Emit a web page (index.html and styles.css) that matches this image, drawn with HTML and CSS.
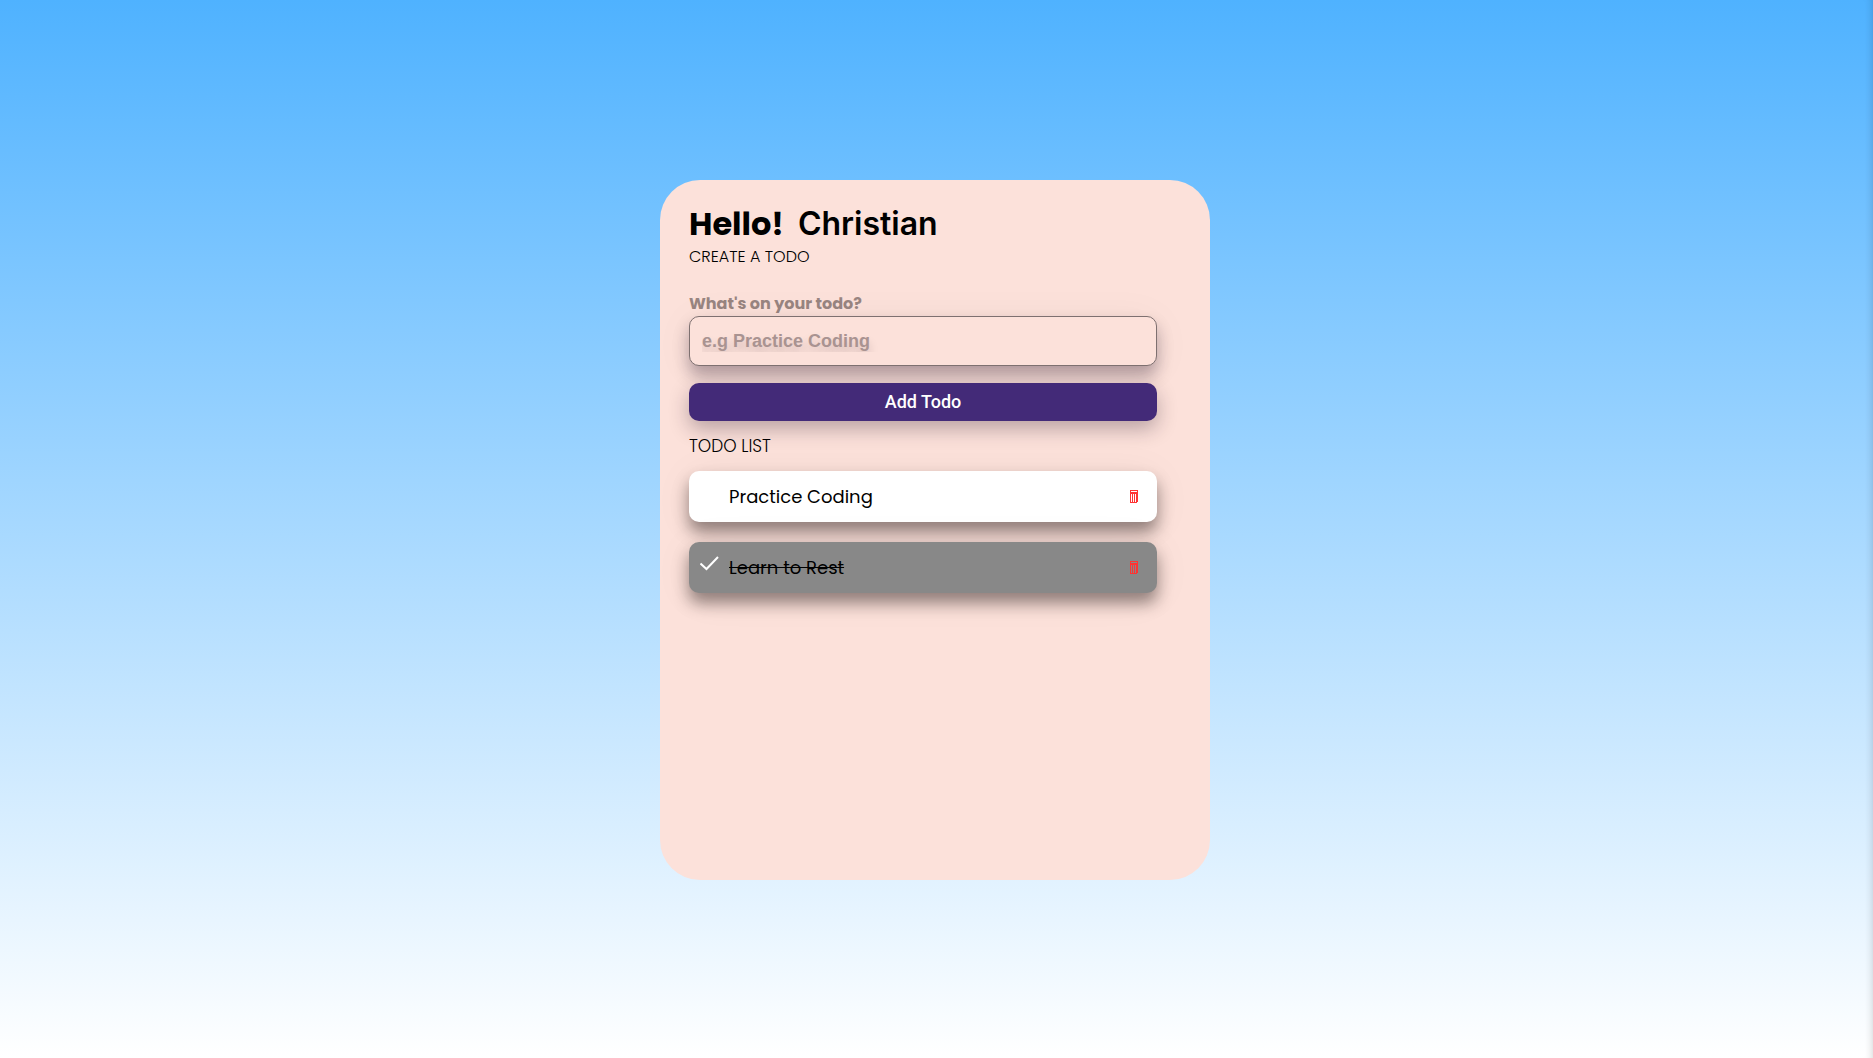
FILE: index.html
```html
<!DOCTYPE html>
<html lang="en">
<head>
<meta charset="utf-8">
<meta name="viewport" content="width=device-width, initial-scale=1">
<title>Todo</title>
<link rel="stylesheet" href="styles.css">
</head>
<body>
<main class="card">
  <h1 class="greeting"><span class="hello">Hello!</span><span class="name">Christian</span></h1>
  <h2 class="subtitle">CREATE A TODO</h2>
  <form class="form">
    <label class="label" for="todo">What's on your todo?</label>
    <input class="field" id="todo" type="text" placeholder="e.g Practice Coding">
    <button class="add" type="button">Add Todo</button>
  </form>
  <h2 class="list-title">TODO LIST</h2>
  <ul class="list">
    <li class="item">
      <span class="tick"><input class="check" id="t1" type="checkbox"></span>
      <label class="text" for="t1">Practice Coding</label>
      <button class="delete" type="button" aria-label="Delete Practice Coding">
        <svg width="8" height="13" viewBox="0 0 8 13" shape-rendering="crispEdges" fill="#ff3333"><path fill-rule="evenodd" d="M0 0h8v12h-1v1H0zM1 1v1h6V1zM1 4v8h1V4zM3 4v8h1V4zM5 4v8h1V4z"/></svg>
      </button>
    </li>
    <li class="item done">
      <span class="tick"><input class="check" id="t2" type="checkbox" checked><svg class="mark" width="20" height="16" viewBox="0 0 20 16" fill="none" stroke="#fff" stroke-width="2"><path d="M0.500 7.500L6.500 13L18 1"/></svg></span>
      <label class="text" for="t2">Learn to Rest</label>
      <button class="delete" type="button" aria-label="Delete Learn to Rest">
        <svg width="8" height="13" viewBox="0 0 8 13" shape-rendering="crispEdges" fill="#ff3333"><path fill-rule="evenodd" d="M0 0h8v12h-1v1H0zM1 1v1h6V1zM1 4v8h1V4zM3 4v8h1V4zM5 4v8h1V4z"/></svg>
      </button>
    </li>
  </ul>
</main>
</body>
</html>
```
FILE: styles.css
```css
* { box-sizing: border-box; }
body {
  margin: 0;
  min-height: 100vh;
  display: flex;
  justify-content: center;
  align-items: center;
  background: linear-gradient(#4fb2ff, #fff);
  box-shadow: inset -8px 0 8px -8px rgba(0, 0, 0, .2);
  font-family: Poppins, Inter, sans-serif;
  color: #000;
  padding: 2px 3px 0 0;
}
.card {
  width: 100%;
  max-width: 550px;
  min-height: 700px;
  padding: 24px 53px 24px 29px;
  border-radius: 40px;
  background: #fce1da;
}
.greeting {
  display: flex;
  gap: 14px;
  margin: 0;
  font-size: 32px;
  line-height: 40px;
}
.hello { font-weight: 700; }
.name { font-weight: 600; font-family: Inter, sans-serif; }
.subtitle, .list-title {
  margin: 0;
  font-size: 16px;
  font-weight: 300;
  line-height: 26px;
}
.form {
  display: flex;
  flex-direction: column;
  margin: 22px 0 12px;
}
.label {
  font-size: 16px;
  font-weight: 700;
  line-height: 24px;
  color: #998581;
}
.field {
  height: 50px;
  margin-bottom: 17px;
  padding: 0 12px;
  border: 1px solid #7e7070;
  border-radius: 10px;
  background: #fce1da;
  box-shadow: 0 10px 16px rgba(32, 16, 40, .32), 0 4px 40px rgba(32, 16, 24, .05);
  font: 700 18px "Liberation Sans", Arial, sans-serif;
}
.field::placeholder {
  color: #a99391;
  opacity: 1;
  text-shadow: 0 6px 10px rgba(32, 16, 24, .2);
}
.add {
  position: relative;
  height: 38px;
  padding: 0 0 1px;
  border: 0;
  border-radius: 10px;
  background: #432a78;
  box-shadow: 0 8px 20px rgba(32, 16, 40, .3);
  color: #fff;
  font: 500 18px Roboto, sans-serif;
}
.list-title { font-size: 17px; }
.list {
  display: grid;
  gap: 20px;
  margin: 12px 0 0;
  padding: 0;
  list-style: none;
}
.item {
  display: flex;
  align-items: center;
  height: 51px;
  padding: 0 19px 0 11px;
  border-radius: 10px;
  background: #fff;
  box-shadow: 0 10px 16px rgba(24, 16, 16, .45), 0 4px 40px rgba(32, 16, 24, .06);
}
.done { background: #888; }
.tick {
  display: grid;
  width: 29px;
  height: 32px;
}
.check {
  grid-area: 1 / 1;
  width: 20px;
  height: 20px;
  margin: 0;
  appearance: none;
}
.mark { grid-area: 1 / 1; margin-top: 4px; }
.text { flex: 1; font-size: 18px; }
.done .text { text-decoration: line-through; }
.delete {
  display: flex;
  padding: 0;
  border: 0;
  background: none;
}
```
